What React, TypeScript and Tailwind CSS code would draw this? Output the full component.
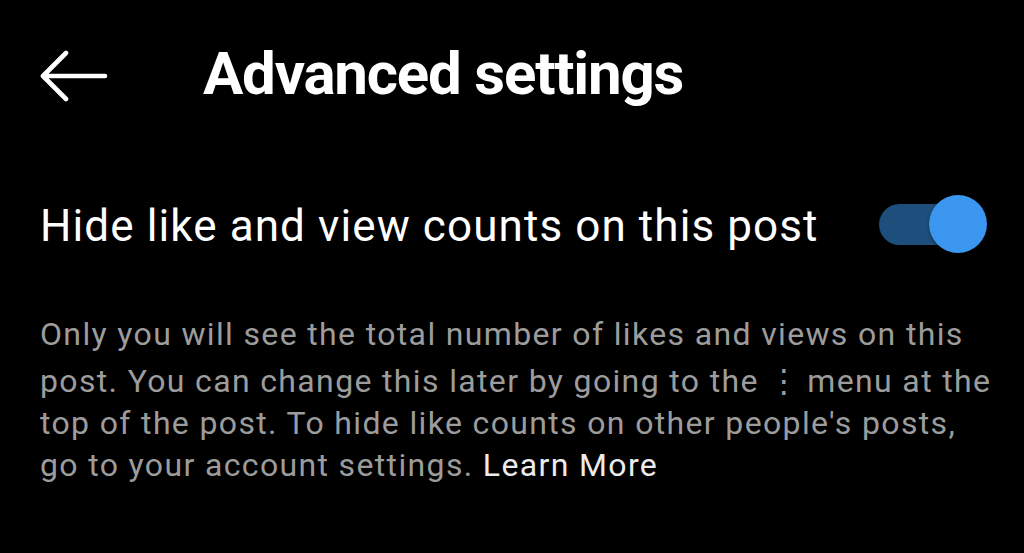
const Toggle = ({ on }: { on: boolean }) => {
  return (
    <div className="relative -top-[2px] h-[58px] w-[110px] flex items-center">
      <div className={`h-[41px] w-[88px] rounded-full ml-[1px] ${on ? "bg-[#1e4f7c]" : "bg-[#555]"}`}></div>
      <div className="absolute right-[1px] top-0 h-[58px] w-[58px] rounded-full bg-[#3a96ef] shadow-[0_1px_3px_rgba(0,0,0,0.5)]"></div>
    </div>
  );
};

export default function App() {
  return (
    <div className="w-[1024px] h-[553px] bg-black text-white font-['Roboto',sans-serif] overflow-hidden">
      <div className="flex items-center h-[60px] mt-[44px] pl-[38px]">
        <svg width="72" height="56" viewBox="0 0 72 56" className="shrink-0">
          <path d="M67 30H6M28 7L5 30L28 53" fill="none" stroke="white" strokeWidth="4.6" strokeLinecap="round" strokeLinejoin="round" />
        </svg>
        <h1 className="ml-[93px] text-[60px] font-bold tracking-[-1.2px] leading-none">Advanced settings</h1>
      </div>

      <div className="flex items-center justify-between pl-[40px] pr-[36px] mt-[93px]">
        <span className="text-[44px] leading-none tracking-[1.1px]">Hide like and view counts on this post</span>
        <Toggle on={true} />
      </div>

      <p className="mt-[58px] pl-[40px] text-[32px] leading-[42px] tracking-[1.35px] text-[#9c9c9c]">
        Only you will see the total number of likes and views on this
        <br />
        post. You can change this later by going to the{" "}
        <span className="inline-block pt-[5px] mr-[8px] w-[22px] text-center font-['DejaVu_Sans',sans-serif] text-[32px] leading-[42px] tracking-normal">⋮</span>{" "}
        menu at the
        <br />
        top of the post. To hide like counts on other people's posts,
        <br />
        go to your account settings. <span className="text-[#ececec]">Learn More</span>
      </p>
    </div>
  );
}
